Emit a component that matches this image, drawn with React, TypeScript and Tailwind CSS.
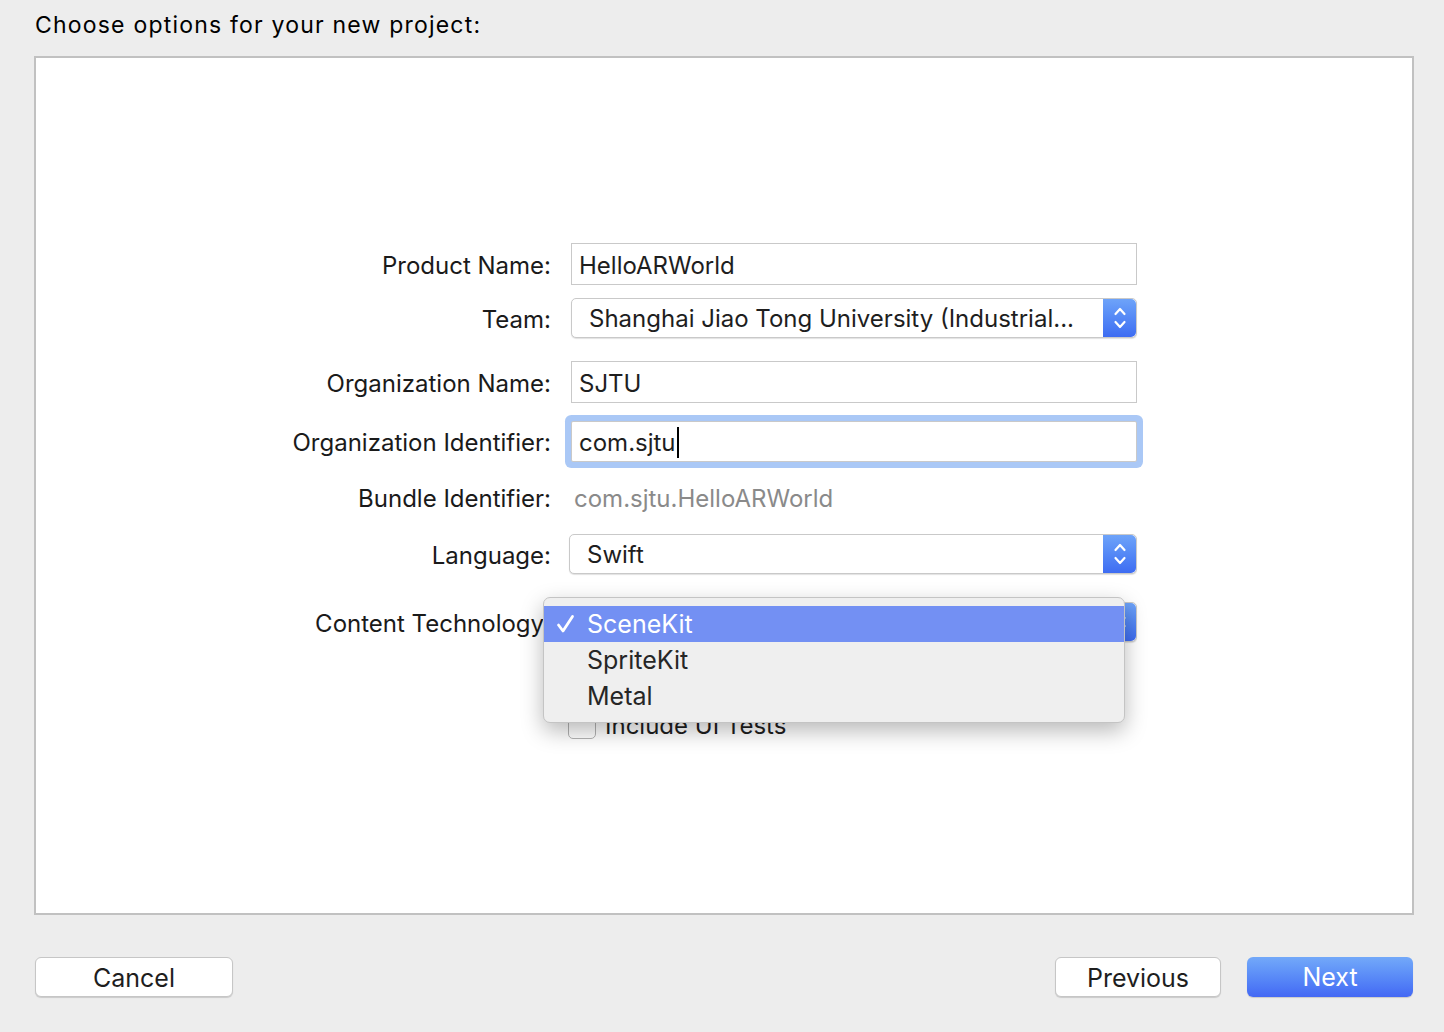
import React from 'react'

const font = { fontFamily: 'Inter, "Noto Sans", sans-serif' }

function Stepper() {
  return (
    <div className="flex h-full w-[33px] items-center justify-center rounded-r-[5px] bg-gradient-to-b from-[#6ea3f9] to-[#3e6cf2]">
      <svg width="14" height="26" viewBox="0 0 14 26" fill="none" stroke="white" strokeWidth="2.2" strokeLinecap="round" strokeLinejoin="round">
        <path d="M2.5 9 L7 4 L11.5 9" />
        <path d="M2.5 17 L7 22 L11.5 17" />
      </svg>
    </div>
  )
}

function Popup({ value, className = '' }: { value: string; className?: string }) {
  return (
    <div className={`flex h-[40px] items-stretch rounded-[5px] border border-[#c9c9c9] bg-white shadow-[0_1px_1px_rgba(0,0,0,0.12)] ${className}`}>
      <div className="flex flex-1 items-center truncate pl-[17px] pt-[2px] text-[24px] text-[#1e1e1e]">{value}</div>
      <Stepper />
    </div>
  )
}

function Label({ children }: { children: React.ReactNode }) {
  return <div className="flex items-center justify-end whitespace-nowrap pt-[3px] text-[24px] text-[#1a1a1a]">{children}</div>
}

export default function App() {
  const menuItems = ['SceneKit', 'SpriteKit', 'Metal']
  return (
    <div className="flex h-[1032px] w-[1444px] flex-col bg-[#ededed]" style={font}>
      <div className="pl-[35px] pt-[10px] text-[23px] leading-[30px] tracking-[1.2px] text-black">Choose options for your new project:</div>

      <div className="ml-[34px] mr-[30px] mt-[16px] h-[859px] border-2 border-[#c1c1c1] bg-white">
        <div className="mt-[185px] flex flex-col">
          {/* Product Name */}
          <div className="grid grid-cols-[515px_566px] gap-x-[20px]">
            <Label>Product Name:</Label>
            <div className="flex h-[42px] items-center border border-[#c9c9c9] bg-white pl-[7px] pt-[3px] text-[24px] text-[#1e1e1e]">HelloARWorld</div>
          </div>

          {/* Team */}
          <div className="mt-[13px] grid grid-cols-[515px_566px] gap-x-[20px]">
            <Label>Team:</Label>
            <Popup value="Shanghai Jiao Tong University (Industrial..." />
          </div>

          {/* Organization Name */}
          <div className="mt-[23px] grid grid-cols-[515px_566px] gap-x-[20px]">
            <Label>Organization Name:</Label>
            <div className="flex h-[42px] items-center border border-[#c9c9c9] bg-white pl-[7px] pt-[3px] text-[24px] text-[#1e1e1e]">SJTU</div>
          </div>

          {/* Organization Identifier */}
          <div className="mt-[18px] grid grid-cols-[515px_566px] gap-x-[20px]">
            <Label>Organization Identifier:</Label>
            <div className="flex h-[41px] items-center rounded-[2px] border border-[#c9c9c9] bg-white pl-[7px] pt-[2px] text-[24px] text-[#1e1e1e] shadow-[0_0_0_6px_#aac8f6]">
              com.sjtu<span className="ml-[1px] inline-block h-[31px] w-[2px] bg-black" />
            </div>
          </div>

          {/* Bundle Identifier */}
          <div className="mt-[16px] grid h-[38px] grid-cols-[515px_566px] gap-x-[20px]">
            <Label>Bundle Identifier:</Label>
            <div className="flex items-center pl-[3px] pt-[3px] text-[24px] text-[#8a8a8a]">com.sjtu.HelloARWorld</div>
          </div>

          {/* Language */}
          <div className="mt-[18px] grid grid-cols-[515px_568px] gap-x-[18px]">
            <Label>Language:</Label>
            <Popup value="Swift" />
          </div>

          {/* Content Technology */}
          <div className="mt-[28px] grid grid-cols-[515px_566px] gap-x-[20px]">
            <Label>Content Technology:</Label>
            <div className="relative">
              <Popup value="SceneKit" />
              <div className="absolute left-[-28px] top-[-5px] z-10 w-[582px] rounded-[7px] border border-[#c4c4c4] bg-[#efefef] py-[8px] shadow-[0_8px_22px_rgba(0,0,0,0.28)]">
                {menuItems.map((item, i) => (
                  <div
                    key={item}
                    className={`flex h-[36px] items-center text-[25px] ${i === 0 ? 'bg-[#7390f3] text-white' : 'text-[#262626]'}`}
                  >
                    <span className="flex w-[43px] items-center pl-[12px]">
                      {i === 0 && (
                        <svg width="19" height="20" viewBox="0 0 19 20" fill="none" stroke="white" strokeWidth="2.8" strokeLinecap="round" strokeLinejoin="round">
                          <path d="M2.5 11 L7 17 L16.5 2.5" />
                        </svg>
                      )}
                    </span>
                    <span className="pt-[2px]">{item}</span>
                  </div>
                ))}
              </div>
            </div>
          </div>

          {/* Include UI Tests */}
          <div className="mt-[66px] grid grid-cols-[515px_566px] gap-x-[17px]">
            <div />
            <div className="flex items-center gap-[9px]">
              <div className="h-[26px] w-[28px] rounded-[5px] border border-[#b3b3b3] bg-white" />
              <span className="text-[24px] text-[#1e1e1e]">Include UI Tests</span>
            </div>
          </div>
        </div>
      </div>

      <div className="ml-[35px] mr-[31px] mt-[42px] flex items-center">
        <button className="h-[40px] w-[198px] rounded-[6px] border border-[#c6c6c6] bg-white pt-[2px] text-[25px] text-[#1e1e1e] shadow-[0_1px_1px_rgba(0,0,0,0.15)]">Cancel</button>
        <div className="flex-1" />
        <button className="h-[40px] w-[166px] rounded-[6px] border border-[#c6c6c6] bg-white pt-[2px] text-[25px] text-[#1e1e1e] shadow-[0_1px_1px_rgba(0,0,0,0.15)]">Previous</button>
        <button className="ml-[26px] h-[40px] w-[166px] rounded-[6px] bg-gradient-to-b from-[#73a9f9] to-[#4468f4] pt-[2px] text-[25px] text-white shadow-[0_1px_1px_rgba(0,0,0,0.15)]">Next</button>
      </div>
    </div>
  )
}
